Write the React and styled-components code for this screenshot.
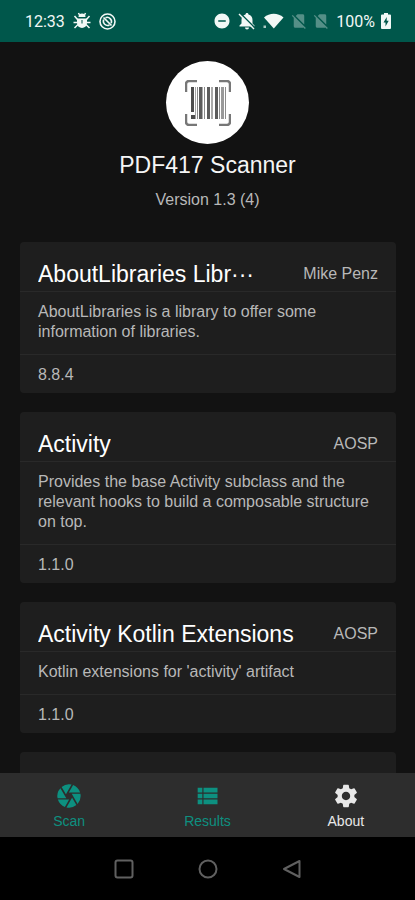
import React from "react";
import styled, { createGlobalStyle } from "styled-components";
import {
  MdCamera,
  MdSettings,
  MdRemoveCircle,
  MdSignalCellularNoSim,
} from "react-icons/md";

const libraries = [
  {
    name: "AboutLibraries Libr···",
    author: "Mike Penz",
    description:
      "AboutLibraries is a library to offer some information of libraries.",
    version: "8.8.4",
  },
  {
    name: "Activity",
    author: "AOSP",
    description:
      "Provides the base Activity subclass and the relevant hooks to build a composable structure on top.",
    version: "1.1.0",
  },
  {
    name: "Activity Kotlin Extensions",
    author: "AOSP",
    description: "Kotlin extensions for 'activity' artifact",
    version: "1.1.0",
  },
];

const tabs = [
  { label: "Scan", icon: MdCamera },
  { label: "Results", icon: ListIcon },
  { label: "About", icon: MdSettings, active: true },
];

// [x, width, color] of each bar inside the scan frame
const bars = [
  [6, 3, "#4c4c4c"],
  [10, 1, "#a5a5a5"],
  [12, 1, "#8c8c8c"],
  [14, 3, "#5c5c5c"],
  [17, 1, "#aaa"],
  [19, 1, "#8c8c8c"],
  [22, 3, "#5c5c5c"],
  [26, 2, "#aaa"],
  [30, 3, "#5c5c5c"],
  [34, 1, "#8c8c8c"],
  [36, 3, "#999"],
  [40, 1, "#8c8c8c"],
];

function ListIcon({ size }) {
  return (
    <svg width={size} height={size} viewBox="0 0 24 24" fill="currentColor">
      <path d="M4 14h4v-4H4zM4 19h4v-4H4zM4 9h4V5H4zM9 14h12v-4H9zM9 19h12v-4H9zM9 5v4h12V5z" />
    </svg>
  );
}

function BugIcon() {
  return (
    <svg width="18" height="18" viewBox="0 0 18 18" fill="currentColor">
      <path d="M5.500 5a3.500 3.500 0 0 1 7 0z" />
      <path d="M4 6.500h10V11a5 5 0 0 1-10 0z" />
      <path
        d="M6.500 3 5.500 1M11.500 3l1-2M4.500 7.500 1.500 4M13.500 7.500l3-3.500M4.500 10.500H.5M13.500 10.500h4M5 12.500 1.500 16M13 12.500l3.500 3.500"
        stroke="currentColor"
        strokeWidth="1.500"
        fill="none"
      />
      <path d="M9 8v3.500" stroke="#00574b" strokeWidth="1" />
    </svg>
  );
}

function BlockedIcon() {
  return (
    <svg width="17" height="17" viewBox="0 0 17 17" fill="none" stroke="currentColor">
      <circle cx="8.500" cy="8.500" r="7.500" strokeWidth="1.600" />
      <path
        d="M4.700 6.500a4.300 4.300 0 0 0 5.800 5.500M6.500 4.700a4.300 4.300 0 0 1 5.700 5.500"
        strokeWidth="1.600"
      />
      <path d="m4.500 4.500 8 8" strokeWidth="1.700" />
    </svg>
  );
}

function BellOffIcon() {
  return (
    <svg width="20" height="18" viewBox="0 0 20 18">
      <path
        d="M10 1c.9 0 1.500.6 1.500 1.500C14.200 3.200 15.500 5.300 15.500 8v3.500l2 2V14.500h-15v-1l2-2V8c0-2.700 1.300-4.800 4-5.500C8.500 1.600 9.100 1 10 1zM8 15.500h4a2 2 0 0 1-4 0z"
        fill="currentColor"
      />
      <path d="m3 1 15 15" stroke="#00574b" strokeWidth="1.600" />
      <path d="m2 2 15 15" stroke="currentColor" strokeWidth="1.400" />
    </svg>
  );
}

function WifiIcon() {
  return (
    <svg width="21" height="16" viewBox="0 0 21 16" fill="currentColor">
      <path d="M1 4.500C6.500-.5 15-.5 20.500 4.500L10.800 15.500z" />
      <path d="M.5 12.500h2.500v2.500H.5z" opacity=".7" />
    </svg>
  );
}

function BatteryIcon() {
  return (
    <svg width="10" height="16" viewBox="0 0 10 16">
      <path
        d="M3 0h4v1.500h2a1 1 0 0 1 1 1V15a1 1 0 0 1-1 1H1a1 1 0 0 1-1-1V2.500a1 1 0 0 1 1-1h2z"
        fill="currentColor"
      />
      <path d="M5.700 4 2.500 9.500h2v4l3.200-5.700h-2z" fill="#00574b" />
    </svg>
  );
}

function ScannerLogo() {
  return (
    <svg width="46" height="46" viewBox="0 0 46 46" fill="none">
      <path
        d="M1 12V4a3 3 0 0 1 3-3h8M34 1h8a3 3 0 0 1 3 3v8M45 34v8a3 3 0 0 1-3 3h-8M12 45H4a3 3 0 0 1-3-3v-8"
        stroke="#777"
        strokeWidth="2.500"
      />
      {bars.map(([x, width, color], i) => (
        <rect key={x} x={x} y="7" width={width} height={i ? 32 : 25} fill={color} />
      ))}
      <path d="M6 35h4v4H6z" fill="#4c4c4c" />
    </svg>
  );
}

function LibraryCard({ name, author, description, version }) {
  return (
    <Card>
      <CardHeader>
        <LibraryName>{name}</LibraryName>
        <Author>{author}</Author>
      </CardHeader>
      <Description>{description}</Description>
      <LibraryVersion>{version}</LibraryVersion>
    </Card>
  );
}

function App() {
  return (
    <>
      <GlobalStyle />
      <Screen>
        <StatusBar>
          <StatusGroup $gap={8}>
            <span>12:33</span>
            <BugIcon />
            <BlockedIcon />
          </StatusGroup>
          <StatusGroup $gap={6}>
            <MdRemoveCircle size={18} />
            <BellOffIcon />
            <WifiIcon />
            <Dimmed>
              <MdSignalCellularNoSim size={18} />
              <MdSignalCellularNoSim size={18} />
            </Dimmed>
            <span>100%</span>
            <BatteryIcon />
          </StatusGroup>
        </StatusBar>
        <Content>
          <AppInfo>
            <Logo>
              <ScannerLogo />
            </Logo>
            <AppName>PDF417 Scanner</AppName>
            <AppVersion>Version 1.3 (4)</AppVersion>
          </AppInfo>
          <CardList>
            {libraries.map((library) => (
              <LibraryCard key={library.name} {...library} />
            ))}
            <EmptyCard />
          </CardList>
        </Content>
        <TabBar>
          {tabs.map(({ label, icon: Icon, active }) => (
            <Tab key={label} type="button" $active={active}>
              <Icon size={28} />
              {label}
            </Tab>
          ))}
        </TabBar>
        <SystemBar>
          <SystemButton type="button" aria-label="Recent apps">
            <svg width="20" height="20" viewBox="0 0 20 20">
              <rect x="1.500" y="1.500" width="17" height="17" rx="2" />
            </svg>
          </SystemButton>
          <SystemButton type="button" aria-label="Home">
            <svg width="20" height="20" viewBox="0 0 20 20">
              <circle cx="10" cy="10" r="8.500" />
            </svg>
          </SystemButton>
          <SystemButton type="button" aria-label="Back">
            <svg width="20" height="20" viewBox="0 0 20 20">
              <path d="M17.500 2v16L2 10z" />
            </svg>
          </SystemButton>
        </SystemBar>
      </Screen>
    </>
  );
}

const GlobalStyle = createGlobalStyle`
  * {
    box-sizing: border-box;
  }
  body {
    margin: 0;
    background: #000;
    font-family: "Liberation Sans", Arial, sans-serif;
  }
  button {
    padding: 0;
    border: none;
    background: none;
    font-family: inherit;
    cursor: pointer;
  }
  svg {
    display: block;
    flex-shrink: 0;
  }
`;

const Screen = styled.div`
  display: flex;
  flex-direction: column;
  height: 100vh;
  background: #121212;
`;

const StatusBar = styled.header`
  display: flex;
  justify-content: space-between;
  align-items: center;
  flex-shrink: 0;
  height: 42px;
  padding: 0 24px 0 25px;
  background: #00574b;
  color: #f2f8f6;
  font-family: Roboto, sans-serif;
  font-size: 16px;
`;

const StatusGroup = styled.div`
  display: flex;
  align-items: center;
  gap: ${({ $gap }) => $gap}px;
`;

const Dimmed = styled.div`
  display: flex;
  gap: 4px;
  opacity: 0.35;
`;

const Content = styled.main`
  flex: 1;
  min-height: 0;
  overflow: hidden;
`;

const AppInfo = styled.section`
  display: flex;
  flex-direction: column;
  align-items: center;
  padding-top: 19px;
`;

const Logo = styled.div`
  display: flex;
  align-items: center;
  justify-content: center;
  width: 83px;
  height: 83px;
  border-radius: 50%;
  background: #fff;
`;

const AppName = styled.h1`
  margin: 6px 0 0;
  color: #f5f5f5;
  font-size: 23px;
  font-weight: 400;
  line-height: 30px;
`;

const AppVersion = styled.p`
  margin: 10px 0 0;
  color: #b8b8b8;
  font-size: 16px;
  line-height: 20px;
`;

const CardList = styled.div`
  display: flex;
  flex-direction: column;
  gap: 19px;
  padding: 32px 19px 0 20px;
`;

const Card = styled.article`
  border-radius: 4px;
  background: #1e1e1e;
  color: #b8b8b8;
  font-size: 16px;
  line-height: 20px;
`;

const EmptyCard = styled(Card)`
  height: 131px;
`;

const CardHeader = styled.header`
  display: flex;
  align-items: center;
  justify-content: space-between;
  gap: 20px;
  height: 50px;
  padding: 14px 18px 0;
  border-bottom: 1px solid #292929;
`;

const LibraryName = styled.h2`
  min-width: 0;
  margin: 0;
  overflow: hidden;
  color: #fff;
  font-size: 23px;
  font-weight: 400;
  line-height: 30px;
  text-overflow: ellipsis;
  white-space: nowrap;
`;

const Author = styled.span`
  flex-shrink: 0;
`;

const Description = styled.p`
  margin: 0;
  padding: 10px 18px 12px;
  border-bottom: 1px solid #292929;
`;

const LibraryVersion = styled.div`
  padding: 10px 18px 8px;
`;

const TabBar = styled.nav`
  display: flex;
  flex-shrink: 0;
  height: 64px;
  background: #2d2d2d;
`;

const Tab = styled.button`
  display: flex;
  flex: 1;
  flex-direction: column;
  align-items: center;
  padding-top: 9px;
  gap: 2px;
  color: ${({ $active }) => ($active ? "#e8e8e8" : "#0d9080")};
  font-size: 14px;
  line-height: 18px;
`;

const SystemBar = styled.footer`
  display: flex;
  align-items: center;
  justify-content: center;
  gap: 64px;
  flex-shrink: 0;
  height: 63px;
  background: #000;
`;

const SystemButton = styled.button`
  svg {
    fill: none;
    stroke: #606060;
    stroke-width: 2;
    stroke-linejoin: round;
  }
`;

export default App;
